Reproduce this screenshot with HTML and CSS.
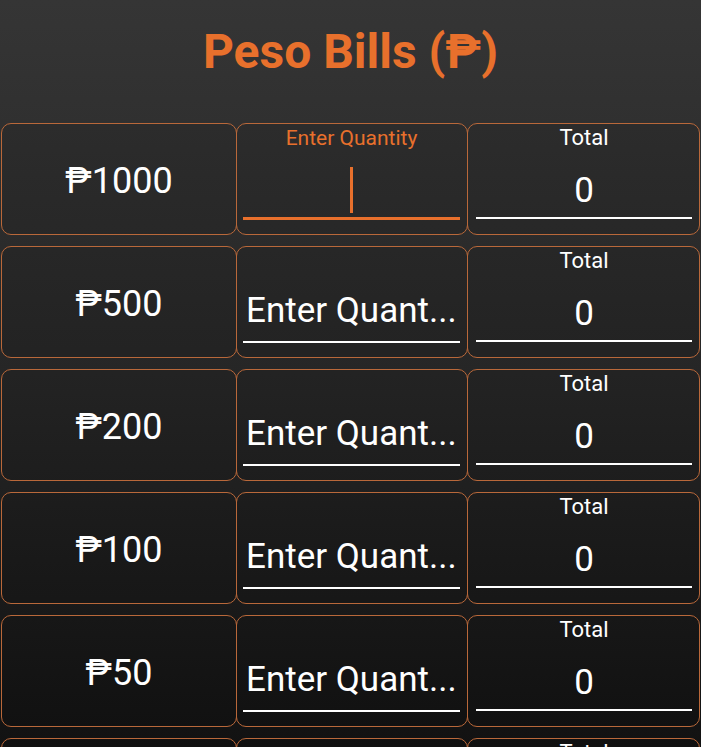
FILE: index.html
```html
<!DOCTYPE html>
<html lang="en">
<head>
<meta charset="utf-8">
<title>Peso Bills</title>
<link rel="stylesheet" href="styles.css">
</head>
<body>
<main class="page">
  <h1 class="title">Peso Bills (₱)</h1>
  <section class="rows">
    <div class="row">
      <div class="cell denom">₱1000</div>
      <div class="cell qty focused">
        <div class="qty-label">Enter Quantity</div>
        <div class="qty-field"><span class="caret"></span></div>
      </div>
      <div class="cell total">
        <div class="total-label">Total</div>
        <div class="total-field">0</div>
      </div>
    </div>
    <div class="row">
      <div class="cell denom">₱500</div>
      <div class="cell qty">
        <div class="qty-field placeholder">Enter Quant...</div>
      </div>
      <div class="cell total">
        <div class="total-label">Total</div>
        <div class="total-field">0</div>
      </div>
    </div>
    <div class="row">
      <div class="cell denom">₱200</div>
      <div class="cell qty">
        <div class="qty-field placeholder">Enter Quant...</div>
      </div>
      <div class="cell total">
        <div class="total-label">Total</div>
        <div class="total-field">0</div>
      </div>
    </div>
    <div class="row">
      <div class="cell denom">₱100</div>
      <div class="cell qty">
        <div class="qty-field placeholder">Enter Quant...</div>
      </div>
      <div class="cell total">
        <div class="total-label">Total</div>
        <div class="total-field">0</div>
      </div>
    </div>
    <div class="row">
      <div class="cell denom">₱50</div>
      <div class="cell qty">
        <div class="qty-field placeholder">Enter Quant...</div>
      </div>
      <div class="cell total">
        <div class="total-label">Total</div>
        <div class="total-field">0</div>
      </div>
    </div>
    <div class="row">
      <div class="cell denom">₱20</div>
      <div class="cell qty">
        <div class="qty-field placeholder">Enter Quant...</div>
      </div>
      <div class="cell total">
        <div class="total-label">Total</div>
        <div class="total-field">0</div>
      </div>
    </div>
  </section>
</main>
</body>
</html>
```

FILE: styles.css
```css
* { box-sizing: border-box; }
html, body {
  margin: 0;
  padding: 0;
  height: 100%;
  overflow: hidden;
}
body {
  background: linear-gradient(180deg, #353535 0%, #262626 50%, #121212 100%);
  font-family: Roboto, "Noto Sans", sans-serif;
  color: #ffffff;
}
.page {
  width: 701px;
  height: 747px;
  overflow: hidden;
}
.title {
  margin: 0;
  height: 123px;
  padding-top: 24px;
  text-align: center;
  font-size: 48px;
  line-height: 56px;
  font-weight: 700;
  color: #e8702c;
}
.rows {
  display: flex;
  flex-direction: column;
  gap: 11px;
  padding-left: 1px;
}
.row {
  display: flex;
  height: 112px;
  flex-shrink: 0;
}
.cell {
  border: 1px solid #b9683a;
  border-radius: 10px;
  background: rgba(0, 0, 0, 0.08);
  height: 112px;
  position: relative;
}
.denom {
  width: 236px;
  display: flex;
  align-items: center;
  justify-content: center;
  font-size: 36px;
  padding-top: 4px;
}
.qty {
  width: 232px;
  margin-left: -1px;
  display: flex;
  flex-direction: column;
  padding: 0 7px 0 6px;
}
.total {
  width: 233px;
  margin-left: -1px;
  display: flex;
  flex-direction: column;
  padding: 0 7px 0 8px;
}
.qty-label {
  height: 28px;
  padding-top: 1px;
  text-align: center;
  font-size: 21px;
  line-height: 26px;
  color: #e8702c;
}
.qty-field {
  margin-top: auto;
  margin-bottom: 14px;
  height: 70px;
  border-bottom: 2px solid #ffffff;
  display: flex;
  align-items: flex-end;
  padding: 0 3px 12px;
  font-size: 35px;
  line-height: 40px;
}
.qty.focused .qty-field {
  border-bottom: 3px solid #e8702c;
  margin-bottom: 14px;
  height: 70px;
  justify-content: center;
  padding-bottom: 4px;
}
.caret {
  display: block;
  width: 3px;
  height: 46px;
  background: #e8702c;
}
.placeholder {
  display: block;
  padding-top: 18px;
  white-space: nowrap;
}
.total-label {
  height: 28px;
  padding-top: 1px;
  text-align: center;
  font-size: 22px;
  line-height: 26px;
}
.total-field {
  margin-top: auto;
  margin-bottom: 15px;
  border-bottom: 2px solid #ffffff;
  text-align: center;
  font-size: 35px;
  line-height: 42px;
  padding-bottom: 5px;
}
```
